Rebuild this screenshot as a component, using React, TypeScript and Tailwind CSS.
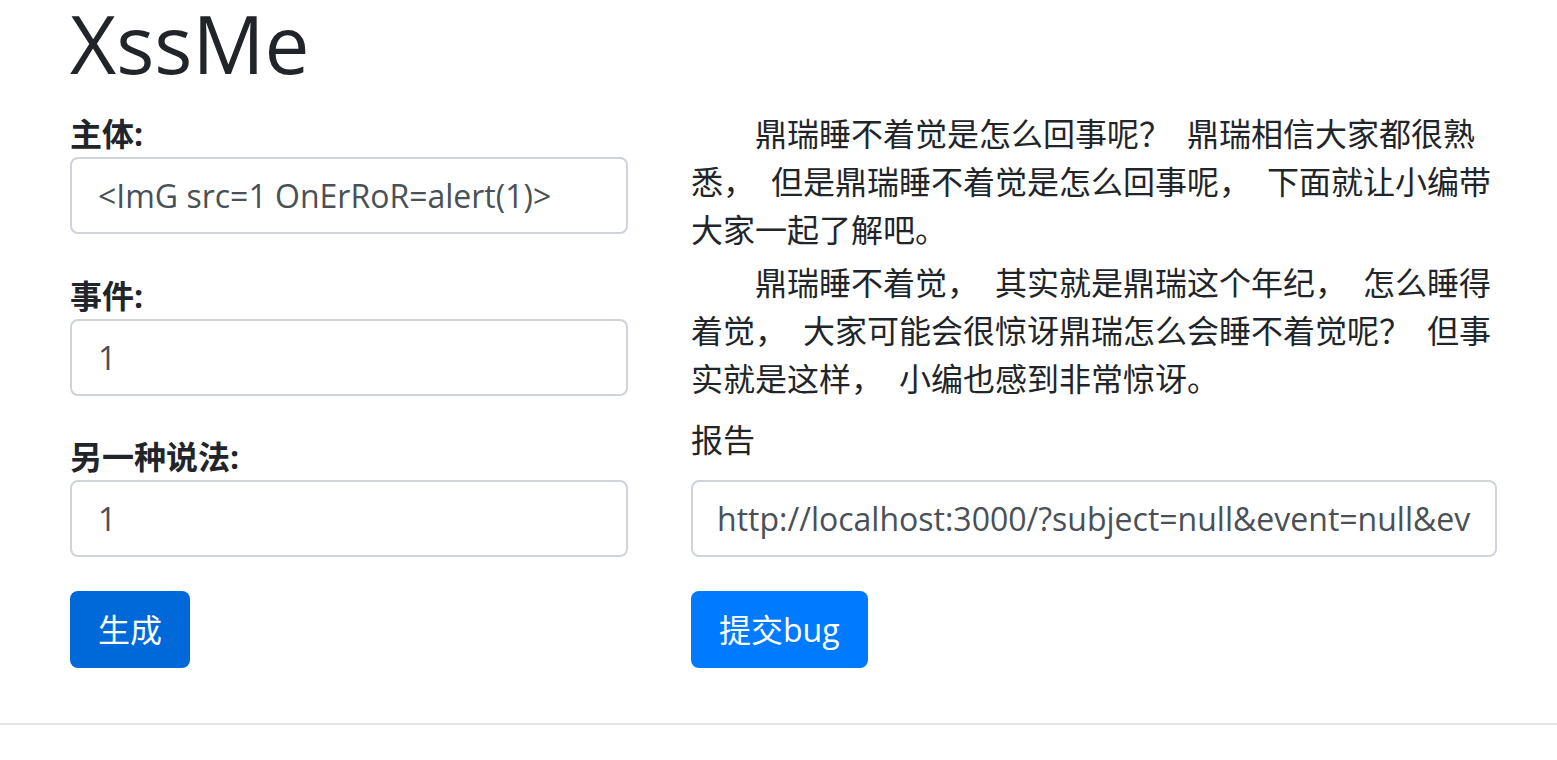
// XssMe form page — two-column layout, scaled-up bootstrap look

const inputCls =
  'block w-full h-[77px] pr-[24px] bg-white border-2 border-[#ced4da] rounded-[8px] text-[32px] leading-[48px] text-[#495057] outline-none'

// fullwidth punctuation gets squeezed to half width here; pad it back to 1em
function cjk(text: string) {
  return text.split(/([，？])/).map((part, i) =>
    part === '，' || part === '？' ? (
      <span key={i} className="tracking-[16px]">{part}</span>
    ) : (
      part
    )
  )
}

function Field({ label, value, className }: { label: string; value: string; className?: string }) {
  return (
    <div className={className}>
      <label className="block h-[47px] text-[32px] leading-[48px] font-bold">{label}</label>
      <input className={inputCls + ' pl-[26px]'} defaultValue={value} readOnly />
    </div>
  )
}

export default function App() {
  return (
    <div className="min-h-[760px] bg-white text-[#212529] font-['Open_Sans','Noto_Sans_CJK_SC',sans-serif]">
      <div className="pl-[70px]">
        <h1 className="h-[86px] mb-[24px] text-[80px] leading-[86px] font-normal">XssMe</h1>

        <div className="flex gap-[63px]">
          {/* left: generator form */}
          <div className="w-[558px]">
            <Field label="主体:" value="<ImG src=1 OnErRoR=alert(1)>" className="mb-[38px]" />
            <Field label="事件:" value="1" className="mb-[37px]" />
            <Field label="另一种说法:" value="1" />
            <button className="mt-[34px] w-[120px] h-[77px] flex items-center justify-center rounded-[8px] bg-[#0069d9] text-white text-[32px] leading-[48px]">
              生成
            </button>
          </div>

          {/* right: generated article + report */}
          <div className="w-[806px] text-[32px] leading-[48px]">
            <p className="indent-[64px] mb-[5px]">
              {cjk('鼎瑞睡不着觉是怎么回事呢？鼎瑞相信大家都很熟悉，但是鼎瑞睡不着觉是怎么回事呢，下面就让小编带大家一起了解吧。')}
            </p>
            <p className="indent-[64px] mb-[13px]">
              {cjk('鼎瑞睡不着觉，其实就是鼎瑞这个年纪，怎么睡得着觉，大家可能会很惊讶鼎瑞怎么会睡不着觉呢？但事实就是这样，小编也感到非常惊讶。')}
            </p>
            <label className="block mb-[16px]">报告</label>
            <input
              className={inputCls + ' pl-[24px]'}
              defaultValue="http://localhost:3000/?subject=null&event=null&event2=null"
              readOnly
            />
            <button className="mt-[34px] h-[77px] px-[28px] flex items-center justify-center rounded-[8px] bg-[#007bff] text-white text-[32px] leading-[48px]">
              提交bug
            </button>
          </div>
        </div>
      </div>

      <div className="mt-[55px] border-t-2 border-[#e5e5e5]" />
    </div>
  )
}
